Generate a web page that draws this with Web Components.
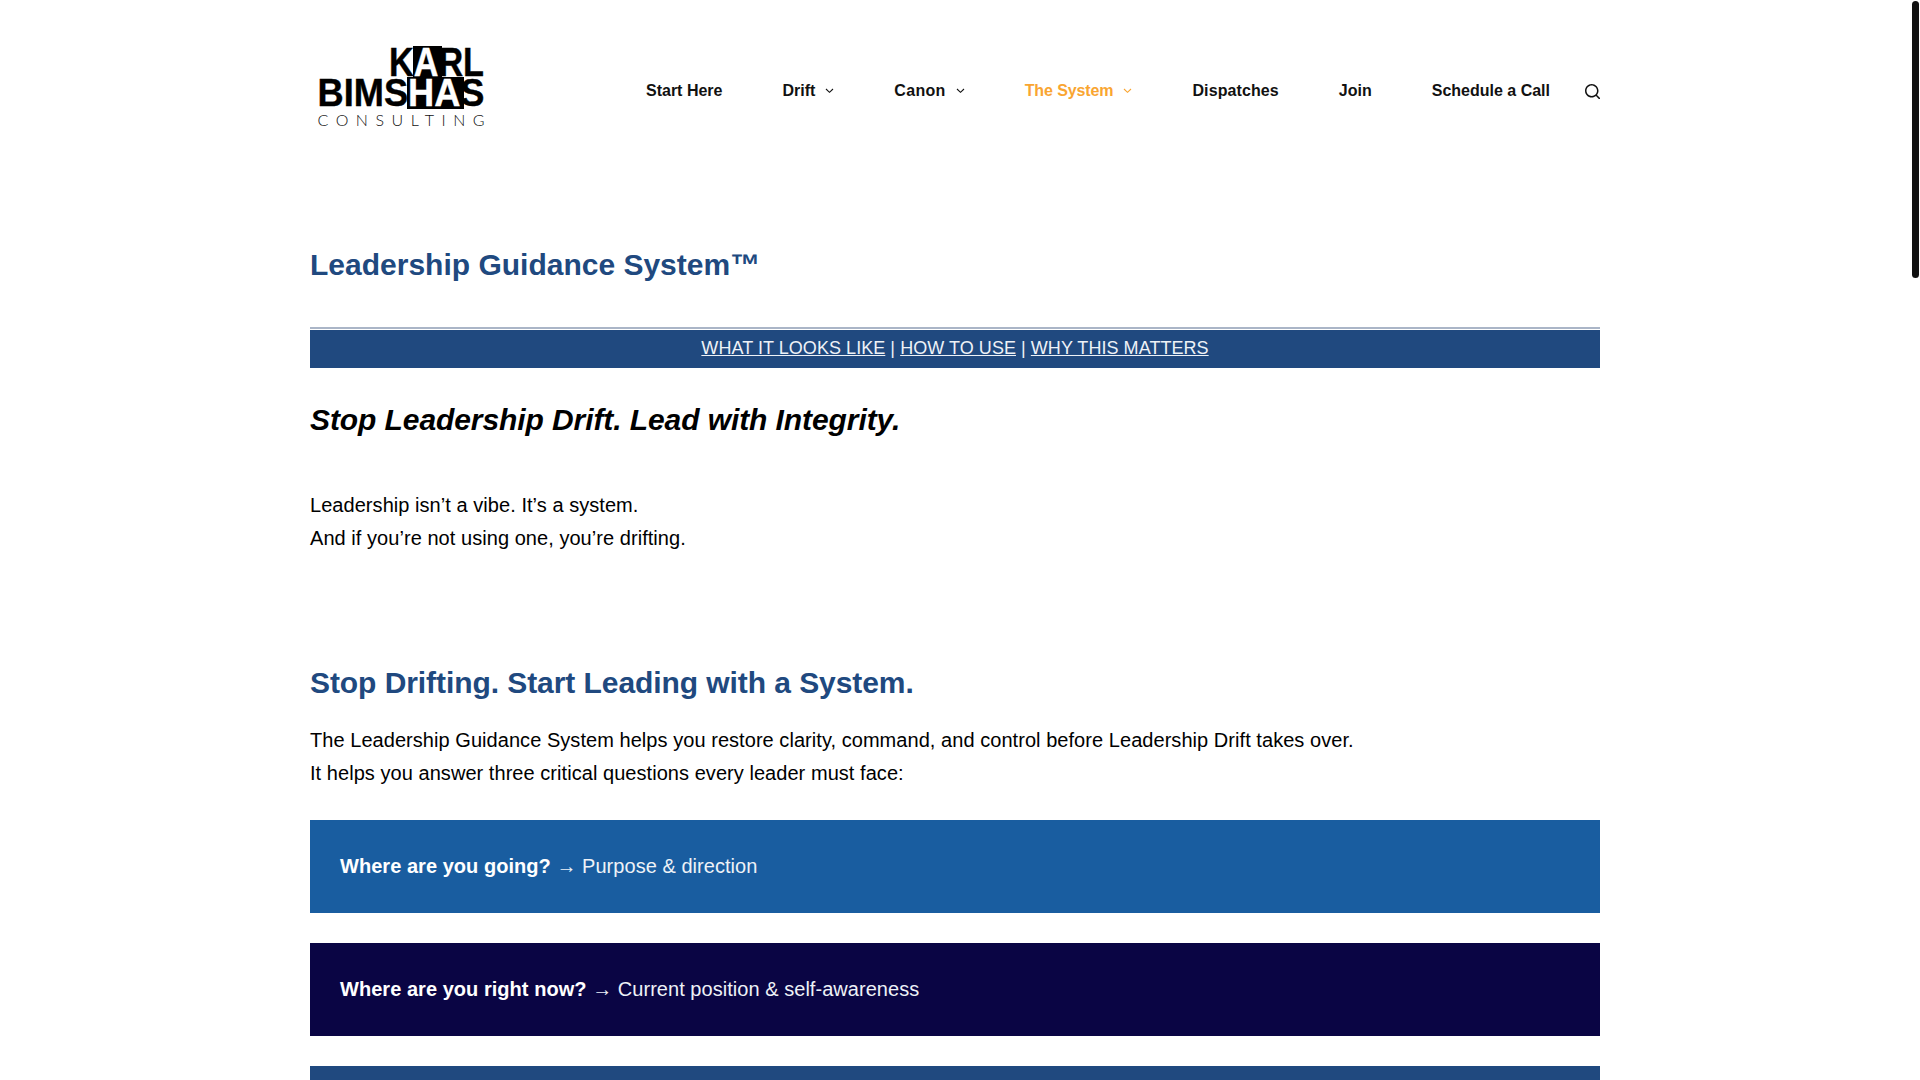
<!DOCTYPE html>
<html lang="en">
<head>
<meta charset="utf-8">
<title>Leadership Guidance System</title>
<style>
  html, body { margin: 0; height: 1080px; overflow: hidden; background: #fff; }
  body { display: flex; font-family: "Liberation Sans", Arial, sans-serif; font-size: 20px; line-height: 33px; color: #000; }
</style>
</head>
<body>
<page-shell>
  <site-header>
    <site-logo slot="logo"></site-logo>
    <nav-item href="#">Start Here</nav-item>
    <nav-item href="#" dropdown>Drift</nav-item>
    <nav-item href="#" dropdown style="letter-spacing:.3px">Canon</nav-item>
    <nav-item href="#" dropdown current style="letter-spacing:-.1px">The System</nav-item>
    <nav-item href="#" style="letter-spacing:.1px">Dispatches</nav-item>
    <nav-item href="#">Join</nav-item>
    <nav-item href="#">Schedule a Call</nav-item>
  </site-header>
  <page-content>
    <page-title>Leadership Guidance System™</page-title>
    <section-links>
      <a href="#">WHAT IT LOOKS LIKE</a> | <a href="#">HOW TO USE</a> | <a href="#">WHY THIS MATTERS</a>
    </section-links>
    <tag-line>Stop Leadership Drift. Lead with Integrity.</tag-line>
    <text-block style="margin-top:49px">Leadership isn’t a vibe. It’s a system.<br>And if you’re not using one, you’re drifting.</text-block>
    <section-title>Stop Drifting. Start Leading with a System.</section-title>
    <text-block style="margin-top:21px">The Leadership Guidance System helps you restore clarity, command, and control before Leadership Drift takes over.<br>It helps you answer three critical questions every leader must face:</text-block>
    <call-out style="margin-top:30px;--bg:#195da0"><b>Where are you going?</b> → Purpose &amp; direction</call-out>
    <call-out style="--bg:#0a0544"><b>Where are you right now?</b> → Current position &amp; self-awareness</call-out>
    <call-out style="--bg:#20497f">&nbsp;</call-out>
  </page-content>
</page-shell>
<fake-scrollbar></fake-scrollbar>

<script>
// small helper so every element below is just a template + a define
function component(name, html) {
  customElements.define(name, class extends HTMLElement {
    constructor() {
      super();
      this.attachShadow({ mode: "open" });
      this.shadowRoot.innerHTML = html;
    }
  });
}

component("page-shell", `
  <style>:host { display: block; flex: 1; min-width: 0; }</style>
  <slot></slot>`);

component("site-header", `
  <style>
    :host { display: flex; align-items: center; box-sizing: border-box; width: 1290px; height: 180px; margin: 0 auto; }
    nav { display: flex; margin-left: auto; padding-top: 1px; }
    svg { width: 15px; height: 15px; margin: 2px 0 0 5px; fill: #111; }
  </style>
  <slot name="logo"></slot>
  <nav><slot></slot></nav>
  <svg viewBox="0 0 15 15"><path d="M14.8,13.7L12,11c0.9-1.2,1.5-2.6,1.5-4.2c0-3.7-3-6.8-6.8-6.8S0,3,0,6.8s3,6.8,6.8,6.8c1.6,0,3.1-0.6,4.2-1.5l2.8,2.8c0.1,0.1,0.3,0.2,0.5,0.2s0.4-0.1,0.5-0.2C15.1,14.5,15.1,14,14.8,13.7z M1.5,6.8c0-2.9,2.4-5.2,5.2-5.2S12,3.9,12,6.8S9.6,12,6.8,12S1.5,9.6,1.5,6.8z"/></svg>`);

component("site-logo", `
  <style>
    :host { display: block; width: 180px; height: 90px; }
    svg { display: block; width: 180px; height: 90px; overflow: visible; }
    text { font-family: "Liberation Sans", Arial, sans-serif; font-weight: 700; fill: #000; stroke: #000; stroke-width: .4px; }
    tspan.w { fill: #fff; stroke: #fff; }
    .thin { font-family: Lato, "Liberation Sans", sans-serif; font-weight: 300; font-size: 16px; fill: #111; stroke: none; }
  </style>
  <svg viewBox="310 45 180 90">
    <rect x="413" y="46" width="29" height="31"/>
    <rect x="407" y="77" width="57" height="32"/>
    <text x="389" y="76" font-size="41" textLength="95" lengthAdjust="spacingAndGlyphs">K<tspan class="w">A</tspan>RL</text>
    <text x="317.5" y="106" font-size="38" textLength="167" lengthAdjust="spacingAndGlyphs">BIMS<tspan class="w">HA</tspan>S</text>
    <text class="thin" x="317.5" y="125.5" textLength="167" lengthAdjust="spacing">CONSULTING</text>
  </svg>`);

customElements.define("nav-item", class extends HTMLElement {
  constructor() {
    super();
    this.attachShadow({ mode: "open" });
    this.shadowRoot.innerHTML = `
      <style>
        :host { display: block; font-size: 16px; font-weight: 700; line-height: 24px; color: #111; }
        :host([current]) { color: #f9a531; }
        a { display: flex; align-items: center; padding: 0 30px; color: inherit; text-decoration: none; }
        svg { display: none; width: 9px; height: 9px; margin-left: 10px; }
        :host([dropdown]) svg { display: block; }
      </style>
      <a><slot></slot><svg viewBox="0 0 9 9"><path d="M1 3l3.5 3.3L8 3" fill="none" stroke="currentColor" stroke-width="1.1"/></svg></a>`;
  }
  connectedCallback() {
    this.shadowRoot.querySelector("a").href = this.getAttribute("href") || "#";
  }
});

component("page-content", `
  <style>:host { display: block; width: 1290px; margin: 0 auto; }</style>
  <slot></slot>`);

component("page-title", `
  <style>
    :host { display: block; margin-top: 65px; font-size: 30px; line-height: 40px; font-weight: 700; color: #20497f; }
  </style><slot></slot>`);

component("section-links", `
  <style>
    :host { display: block; margin-top: 42px; border-top: 2px solid #aab5c7; padding-top: 1px; font-size: 18px; letter-spacing: .05px; color: #eef2f7; }
    div { background: #20497f; text-align: center; padding: 2px 0 3px; }
    ::slotted(a) { color: #eef2f7; }
  </style><div><slot></slot></div>`);

component("tag-line", `
  <style>
    :host { display: block; margin-top: 32px; font-size: 30px; line-height: 40px; font-weight: 700; font-style: italic; letter-spacing: -.085px; color: #000; }
  </style><slot></slot>`);

component("text-block", `
  <style>:host { display: block; letter-spacing: .05px; }</style><slot></slot>`);

component("section-title", `
  <style>
    :host { display: block; margin-top: 108px; font-size: 30px; line-height: 40px; font-weight: 700; letter-spacing: -.07px; color: #20497f; }
  </style><slot></slot>`);

component("call-out", `
  <style>
    :host { display: block; margin-top: 30px; padding: 30px; letter-spacing: .04px; background: var(--bg); color: #eef2f7; }
    ::slotted(b) { color: #fff; }
  </style><slot></slot>`);

component("fake-scrollbar", `
  <style>
    :host { display: block; width: 10px; flex: none; padding-top: 1px; }
    div { width: 7px; height: 277px; margin-left: 2px; border-radius: 4px; background: #111; }
  </style><div></div>`);
</script>
</body>
</html>
